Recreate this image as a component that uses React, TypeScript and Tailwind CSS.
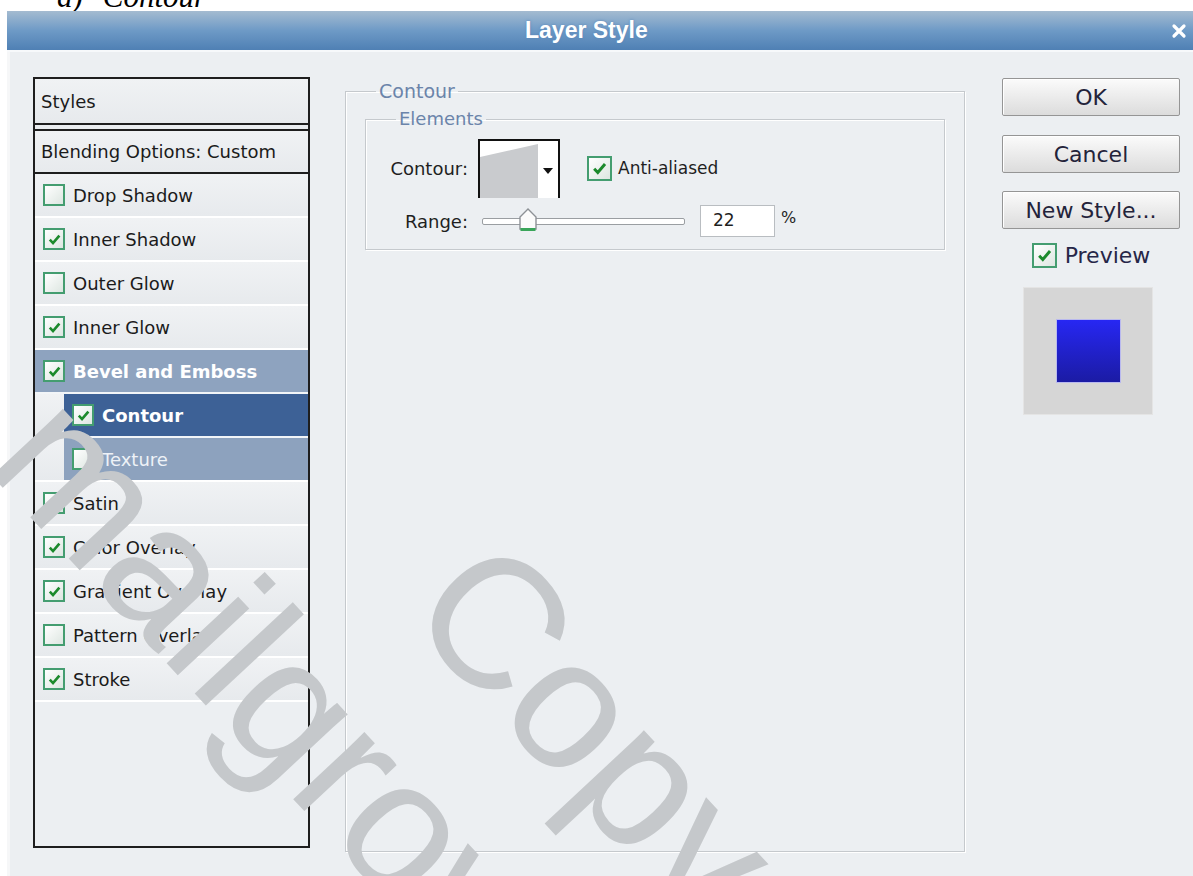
import clsx from "clsx";

type StyleRow = {
  label: string;
  checked: boolean;
  tone?: "parent" | "active" | "child";
};

const STYLE_ROWS: StyleRow[] = [
  { label: "Drop Shadow", checked: false },
  { label: "Inner Shadow", checked: true },
  { label: "Outer Glow", checked: false },
  { label: "Inner Glow", checked: true },
  { label: "Bevel and Emboss", checked: true, tone: "parent" },
  { label: "Contour", checked: true, tone: "active" },
  { label: "Texture", checked: false, tone: "child" },
  { label: "Satin", checked: false },
  { label: "Color Overlay", checked: true },
  { label: "Gradient Overlay", checked: true },
  { label: "Pattern Overlay", checked: false },
  { label: "Stroke", checked: true },
];

function Check({ on, big = false }: { on: boolean; big?: boolean }) {
  return (
    <span
      className={clsx(
        "flex shrink-0 items-center justify-center border-2 border-[#449d70] bg-gradient-to-br from-white to-[#dde6e1]",
        big ? "h-[25px] w-[25px]" : "h-[22px] w-[22px]"
      )}
    >
      {on && (
        <svg viewBox="0 0 16 16" className={big ? "h-[17px] w-[17px]" : "h-[15px] w-[15px]"}>
          <path d="M3 8.2 6.4 11.8 13.2 3.8" fill="none" stroke="#1c8a2c" strokeWidth="2.8" />
        </svg>
      )}
    </span>
  );
}

function ListRow({ row }: { row: StyleRow }) {
  const sub = row.tone === "active" || row.tone === "child";
  return (
    <div
      className={clsx(
        "h-[44px] border-b-2",
        row.tone === "parent" || row.tone === "active" ? "border-[#f2f5f8]" : "border-white",
        row.tone === "parent"
          ? "bg-[#8ea3bf]"
          : "bg-gradient-to-b from-[#f0f2f4] to-[#e7eaed]"
      )}
    >
      <div
        className={clsx(
          "flex h-full items-center gap-[8px] pl-[8px]",
          sub && "ml-[29px]",
          row.tone === "active" && "bg-[#3d6196]",
          row.tone === "child" && "bg-[#8da2be]"
        )}
      >
        <Check on={row.checked} />
        <span
          className={clsx(
            row.tone === "parent" || row.tone === "active"
              ? "font-bold text-white"
              : row.tone === "child"
              ? "text-[#eef2f7]"
              : "text-[#1b1b1b]"
          )}
        >
          {row.label}
        </span>
      </div>
    </div>
  );
}

function StylesList() {
  return (
    <div className="flex h-[771px] w-[277px] shrink-0 flex-col border-2 border-[#1e1e1e] bg-[#eceff2] text-[18px] font-['DejaVu_Sans',sans-serif]">
      <div className="flex h-[44px] items-center bg-gradient-to-b from-[#f0f2f4] to-[#e7eaed] pl-[6px] text-[#1b1b1b]">
        Styles
      </div>
      <div className="h-[8px] border-y-2 border-[#1e1e1e] bg-[#e9ecef]" />
      <div className="flex h-[43px] items-center border-b-2 border-[#1e1e1e] bg-gradient-to-b from-[#f0f2f4] to-[#e7eaed] pl-[6px] text-[#1b1b1b]">
        Blending Options: Custom
      </div>
      {STYLE_ROWS.map((row) => (
        <ListRow key={row.label} row={row} />
      ))}
    </div>
  );
}

function ContourPicker() {
  return (
    <div className="h-[59px] w-[82px] border-x-2 border-t-2 border-[#111] bg-white">
      <svg viewBox="0 0 78 57" className="h-full w-full">
        <polygon points="0,16 58,3 58,57 0,57" fill="#c9cbce" />
        <polygon points="63,27 73,27 68,33" fill="#111" />
      </svg>
    </div>
  );
}

function RangeSlider() {
  return (
    <div className="relative h-[7px] w-[203px] rounded-[2px] border border-[#9a9ea2] bg-white">
      <svg viewBox="0 0 20 25" className="absolute left-[35px] top-[-12px] h-[25px] w-[20px]">
        <path d="M2 10 10 2 18 10 18 22 2 22Z" fill="#fbfbfb" stroke="#8d9196" strokeWidth="1.4" />
        <path d="M2.5 22.5 17.5 22.5" stroke="#3aa55a" strokeWidth="3" />
      </svg>
    </div>
  );
}

function ContourPanel() {
  return (
    <fieldset className="mt-[4px] h-[771px] w-[620px] shrink-0 border border-[#c5c9cd] shadow-[inset_1px_1px_0_#fff,1px_1px_0_#fff]">
      <legend className="ml-[30px] px-[3px] text-[19px] leading-[20px] text-[#6b84aa]">Contour</legend>
      <fieldset className="mx-[19px] mt-[8px] border border-[#c5c9cd] pb-[12px] shadow-[inset_1px_1px_0_#fff,1px_1px_0_#fff]">
        <legend className="ml-[30px] px-[3px] text-[18px] leading-[20px] text-[#6b84aa]">Elements</legend>
        <div className="mt-[10px] flex items-center text-[18px] text-[#1f1f1f]">
          <span className="w-[102px] text-right">Contour:</span>
          <div className="ml-[10px]">
            <ContourPicker />
          </div>
          <div className="ml-[27px] flex items-center gap-[6px]">
            <Check on big />
            <span className="text-[17px]">Anti-aliased</span>
          </div>
        </div>
        <div className="mt-[7px] flex items-center text-[18px] text-[#1f1f1f]">
          <span className="w-[102px] text-right">Range:</span>
          <div className="ml-[14px]">
            <RangeSlider />
          </div>
          <div className="ml-[15px] flex h-[32px] w-[75px] items-center border border-[#b9bdc1] bg-white pl-[12px] text-[17px]">
            22
          </div>
          <span className="mb-[6px] ml-[6px] text-[16px]">%</span>
        </div>
      </fieldset>
    </fieldset>
  );
}

function DialogButton({ label }: { label: string }) {
  return (
    <button
      type="button"
      className="flex h-[38px] w-[178px] items-center justify-center rounded-[2px] border border-[#959595] bg-gradient-to-b from-[#fbfbfb] to-[#dcdcdc] text-[22px] text-[#23233a] shadow-[inset_1px_1px_0_#fff]"
    >
      {label}
    </button>
  );
}

function ActionColumn() {
  return (
    <div className="mt-[1px] flex w-[178px] shrink-0 flex-col items-center">
      <DialogButton label="OK" />
      <div className="mt-[19px]">
        <DialogButton label="Cancel" />
      </div>
      <div className="mt-[18px]">
        <DialogButton label="New Style..." />
      </div>
      <div className="mt-[10px] flex items-center gap-[8px] text-[22px] text-[#262648]">
        <Check on big />
        <span>Preview</span>
      </div>
      <div className="mr-[6px] mt-[15px] flex h-[128px] w-[130px] items-center justify-center border border-[#e4e4e4] bg-[#d6d6d6]">
        <div className="h-[62px] w-[63px] bg-gradient-to-b from-[#2727f3] to-[#1b1ba4] shadow-[0_0_0_1px_#b9b9ef]" />
      </div>
    </div>
  );
}

export default function App() {
  return (
    <div className="relative flex h-[876px] w-[1193px] flex-col overflow-hidden bg-white font-['DejaVu_Sans',sans-serif]">
      {/* caption above the dialog */}
      <div className="h-[11px] overflow-hidden pl-[57px]">
        <div className="-mt-[19px] flex gap-[20px] font-['Liberation_Serif',serif] text-[31px] italic leading-none text-black">
          <span>d)</span>
          <span>Contour</span>
        </div>
      </div>

      <div className="ml-[7px] flex flex-1 flex-col bg-[#eceff2]">
        {/* title bar */}
        <div className="flex h-[39px] items-center bg-gradient-to-b from-[#a4bbd0] via-[#6e9ac6] to-[#4f80b4]">
          <div className="w-[518px]" />
          <span className="font-['Liberation_Sans',Arial,sans-serif] text-[23px] font-bold text-white [text-shadow:0_0_3px_#5a86b8]">
            Layer Style
          </span>
          <div className="flex flex-1 justify-end pr-[6px]">
            <svg viewBox="0 0 16 16" className="h-[16px] w-[16px]">
              <path d="M3 3 13 13M13 3 3 13" stroke="#fff" strokeWidth="3.2" strokeLinecap="round" />
            </svg>
          </div>
        </div>
        <div className="h-[2px] bg-[#f7f9fb]" />

        {/* dialog body */}
        <div className="flex flex-1 items-start border-l-[3px] border-[#f6f7f8] pl-[23px] pt-[25px]">
          <StylesList />
          <div className="ml-[35px]">
            <ContourPanel />
          </div>
          <div className="ml-[37px]">
            <ActionColumn />
          </div>
        </div>
      </div>

      {/* watermark */}
      <span className="pointer-events-none absolute left-[97px] top-[360px] origin-top-left rotate-[47deg] whitespace-nowrap font-['Liberation_Sans',Arial,sans-serif] text-[185px] leading-none text-[#c5c8cb]">
        mailgrow
      </span>
      <span className="pointer-events-none absolute left-[517px] top-[509px] origin-top-left rotate-[47deg] whitespace-nowrap font-['Liberation_Sans',Arial,sans-serif] text-[185px] leading-none text-[#c5c8cb]">
        Copy
      </span>
    </div>
  );
}
